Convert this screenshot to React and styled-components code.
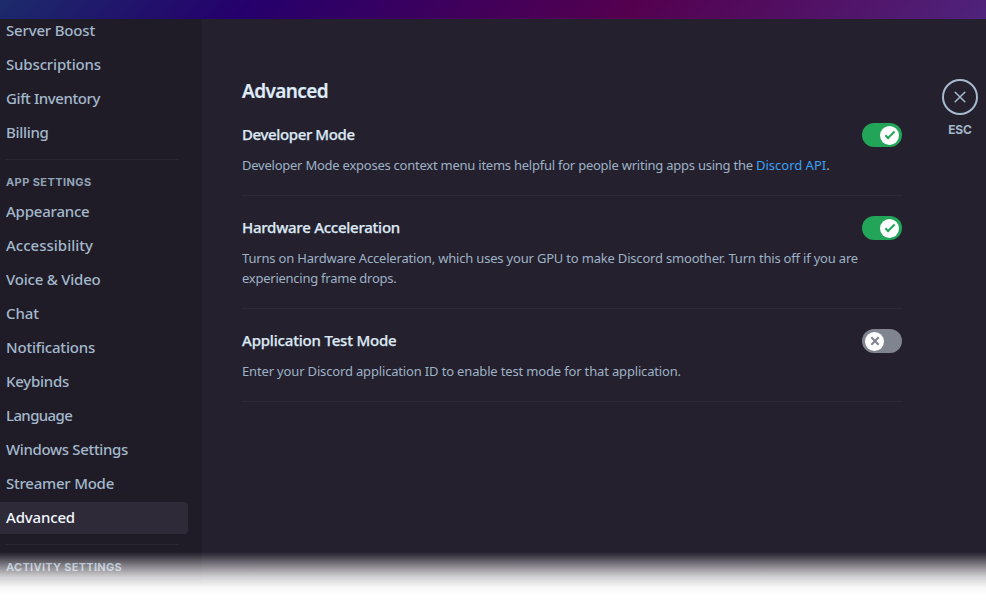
import React from "react";
import styled, { createGlobalStyle } from "styled-components";

const GlobalStyle = createGlobalStyle`
  *, *::before, *::after { box-sizing: border-box; }
  html, body { margin: 0; padding: 0; overflow: hidden; background: #fff; }
  body { font-family: "Noto Sans", sans-serif; }
`;

const Window = styled.div`
  position: relative;
  display: flex;
  flex-direction: column;
  width: 986px;
  height: 602px;
  overflow: hidden;
  background: #25202d;
`;

const TopBar = styled.header`
  flex: 0 0 19px;
  background: linear-gradient(137deg, #1c2b6b 0%, #25006c 25%, #54004f 63.5%, #4f237c 100%);
`;

const Body = styled.div`
  flex: 1;
  display: flex;
  min-height: 0;
  overflow: hidden;
`;

const Sidebar = styled.nav`
  flex: 0 0 202px;
  display: flex;
  flex-direction: column;
  margin-top: -4px;
  background: #201c27;
`;

const NavItem = styled.a`
  flex: 0 0 32px;
  width: 188px;
  margin-bottom: 2px;
  padding-left: 6px;
  border-radius: 0 4px 4px 0;
  background: ${(p) => (p.$active ? "#2f2a38" : "transparent")};
  color: ${(p) => (p.$active ? "#f2f8ff" : "#a3b8cb")};
  font-size: 15px;
  font-weight: 500;
  line-height: 31px;
  letter-spacing: ${(p) => p.$tracking}px;
  white-space: nowrap;
  cursor: pointer;
`;

const NavSeparator = styled.div`
  flex: 0 0 1px;
  width: 172px;
  margin: 8px 0 0 6px;
  background: #2c2833;
`;

const NavHeader = styled.h2`
  flex: 0 0 36px;
  margin: 0;
  padding: 14px 0 6px 6px;
  color: #91a5b7;
  font: 700 11px/16px Inter, sans-serif;
  letter-spacing: ${(p) => p.$tracking}px;
`;

const Main = styled.main`
  flex: 1;
  display: flex;
  align-items: flex-start;
  gap: 40px;
  padding: 60px 8px 0 40px;
`;

const Content = styled.section`
  width: 660px;
`;

const Title = styled.h1`
  margin: 0 0 20px;
  color: #dfebf8;
  font-size: 19px;
  font-weight: 600;
  line-height: 24px;
  letter-spacing: -0.6px;
  -webkit-text-stroke: 0.2px #dfebf8;
`;

const Setting = styled.div`
  padding-bottom: 20px;
  margin-bottom: 20px;
  border-bottom: 1px solid #2d2935;
`;

const SettingHead = styled.div`
  display: flex;
  justify-content: space-between;
  align-items: flex-start;
  height: 24px;
  margin-bottom: 8px;
`;

const SettingName = styled.div`
  color: #dce8f4;
  font-size: 15px;
  font-weight: 500;
  line-height: 22px;
  letter-spacing: ${(p) => p.$tracking}px;
  -webkit-text-stroke: 0.25px #dce8f4;
`;

const Description = styled.div`
  color: #9db2c5;
  font-size: 13px;
  line-height: 20px;
  white-space: nowrap;
`;

const Line = styled.div`
  letter-spacing: ${(p) => p.$tracking}px;
`;

const Link = styled.a`
  color: #3ba0f5;
  letter-spacing: 0;
`;

const Track = styled.button`
  display: flex;
  justify-content: ${(p) => (p.$on ? "flex-end" : "flex-start")};
  align-items: center;
  width: 40px;
  height: 24px;
  padding: 3px;
  border: 0;
  border-radius: 12px;
  background: ${(p) => (p.$on ? "#23a559" : "#80848e")};
`;

const Thumb = styled.span`
  display: flex;
  align-items: center;
  justify-content: center;
  width: 19px;
  height: 19px;
  border-radius: 50%;
  background: #fff;
`;

const CloseArea = styled.div`
  display: flex;
  flex-direction: column;
  align-items: center;
  width: 36px;
`;

const CloseButton = styled.button`
  display: flex;
  align-items: center;
  justify-content: center;
  width: 36px;
  height: 36px;
  padding: 0;
  border: 2px solid #a6bace;
  border-radius: 50%;
  background: transparent;
`;

const CloseLabel = styled.span`
  margin-top: 7px;
  color: #a3b5c8;
  font: 700 12px/16px Inter, sans-serif;
  letter-spacing: -0.1px;
`;

const BottomFade = styled.div`
  position: absolute;
  inset: auto 0 0 0;
  height: 50px;
  pointer-events: none;
  background: linear-gradient(
    to bottom,
    rgba(255, 255, 255, 0) 0%,
    rgba(255, 255, 255, 0.12) 8%,
    rgba(255, 255, 255, 0.5) 31%,
    rgba(255, 255, 255, 0.79) 50%,
    rgba(255, 255, 255, 0.96) 70%,
    #fff 88%
  );
`;

function Switch({ on, label }) {
  return (
    <Track type="button" role="switch" aria-checked={on} aria-label={label} $on={on}>
      <Thumb>
        <svg width="18" height="18" viewBox="0 0 20 20">
          {on ? (
            <>
              <path fill="#23a559" d="M7.89561 14.8538L6.30462 13.2629L14.3099 5.25755L15.9009 6.84854L7.89561 14.8538Z" />
              <path fill="#23a559" d="M4.08643 11.0903L5.67742 9.49929L9.4485 13.2704L7.85751 14.8614L4.08643 11.0903Z" />
            </>
          ) : (
            <>
              <path fill="#80848e" d="M5.13231 6.72963L6.7233 5.13864L14.855 13.2704L13.264 14.8614L5.13231 6.72963Z" />
              <path fill="#80848e" d="M13.2704 5.13864L14.8614 6.72963L6.72963 14.8614L5.13864 13.2704L13.2704 5.13864Z" />
            </>
          )}
        </svg>
      </Thumb>
    </Track>
  );
}

const accountItems = [
  ["Server Boost", -0.18],
  ["Subscriptions", -0.15],
  ["Gift Inventory", -0.41],
  ["Billing", -0.32],
];

const appItems = [
  ["Appearance", -0.21],
  ["Accessibility", 0.01],
  ["Voice & Video", -0.22],
  ["Chat", -0.06],
  ["Notifications", -0.2],
  ["Keybinds", -0.26],
  ["Language", -0.62],
  ["Windows Settings", -0.34],
  ["Streamer Mode", -0.24],
  ["Advanced", -0.16],
];

const settings = [
  {
    name: "Developer Mode",
    tracking: -0.38,
    on: true,
    lines: [
      {
        text: "Developer Mode exposes context menu items helpful for people writing apps using the ",
        tracking: -0.24,
        link: "Discord API",
      },
    ],
  },
  {
    name: "Hardware Acceleration",
    tracking: -0.25,
    on: true,
    lines: [
      {
        text: "Turns on Hardware Acceleration, which uses your GPU to make Discord smoother. Turn this off if you are",
        tracking: -0.19,
      },
      { text: "experiencing frame drops.", tracking: -0.25 },
    ],
  },
  {
    name: "Application Test Mode",
    tracking: -0.19,
    on: false,
    lines: [
      {
        text: "Enter your Discord application ID to enable test mode for that application.",
        tracking: -0.16,
      },
    ],
  },
];

function NavGroup({ items, active }) {
  return items.map(([label, tracking]) => (
    <NavItem key={label} $tracking={tracking} $active={label === active}>
      {label}
    </NavItem>
  ));
}

export default function App() {
  return (
    <>
      <GlobalStyle />
      <Window>
        <TopBar />
        <Body>
          <Sidebar>
            <NavGroup items={accountItems} />
            <NavSeparator />
            <NavHeader $tracking={0.41}>APP SETTINGS</NavHeader>
            <NavGroup items={appItems} active="Advanced" />
            <NavSeparator />
            <NavHeader $tracking={0.28}>ACTIVITY SETTINGS</NavHeader>
            <NavItem $tracking={-0.2}>Activity Privacy</NavItem>
          </Sidebar>
          <Main>
            <Content>
              <Title>Advanced</Title>
              {settings.map((s) => (
                <Setting key={s.name}>
                  <SettingHead>
                    <SettingName $tracking={s.tracking}>{s.name}</SettingName>
                    <Switch on={s.on} label={s.name} />
                  </SettingHead>
                  <Description>
                    {s.lines.map((l) => (
                      <Line key={l.text} $tracking={l.tracking}>
                        {l.text}
                        {l.link && (
                          <>
                            <Link>{l.link}</Link>.
                          </>
                        )}
                      </Line>
                    ))}
                  </Description>
                </Setting>
              ))}
            </Content>
            <CloseArea>
              <CloseButton type="button" aria-label="Close">
                <svg width="12" height="12" viewBox="0 0 12 12" stroke="#a6bace" strokeWidth="1.5" strokeLinecap="round">
                  <path d="M1.2 1.2 10.8 10.8M10.8 1.2 1.2 10.8" />
                </svg>
              </CloseButton>
              <CloseLabel>ESC</CloseLabel>
            </CloseArea>
          </Main>
        </Body>
        <BottomFade />
      </Window>
    </>
  );
}
